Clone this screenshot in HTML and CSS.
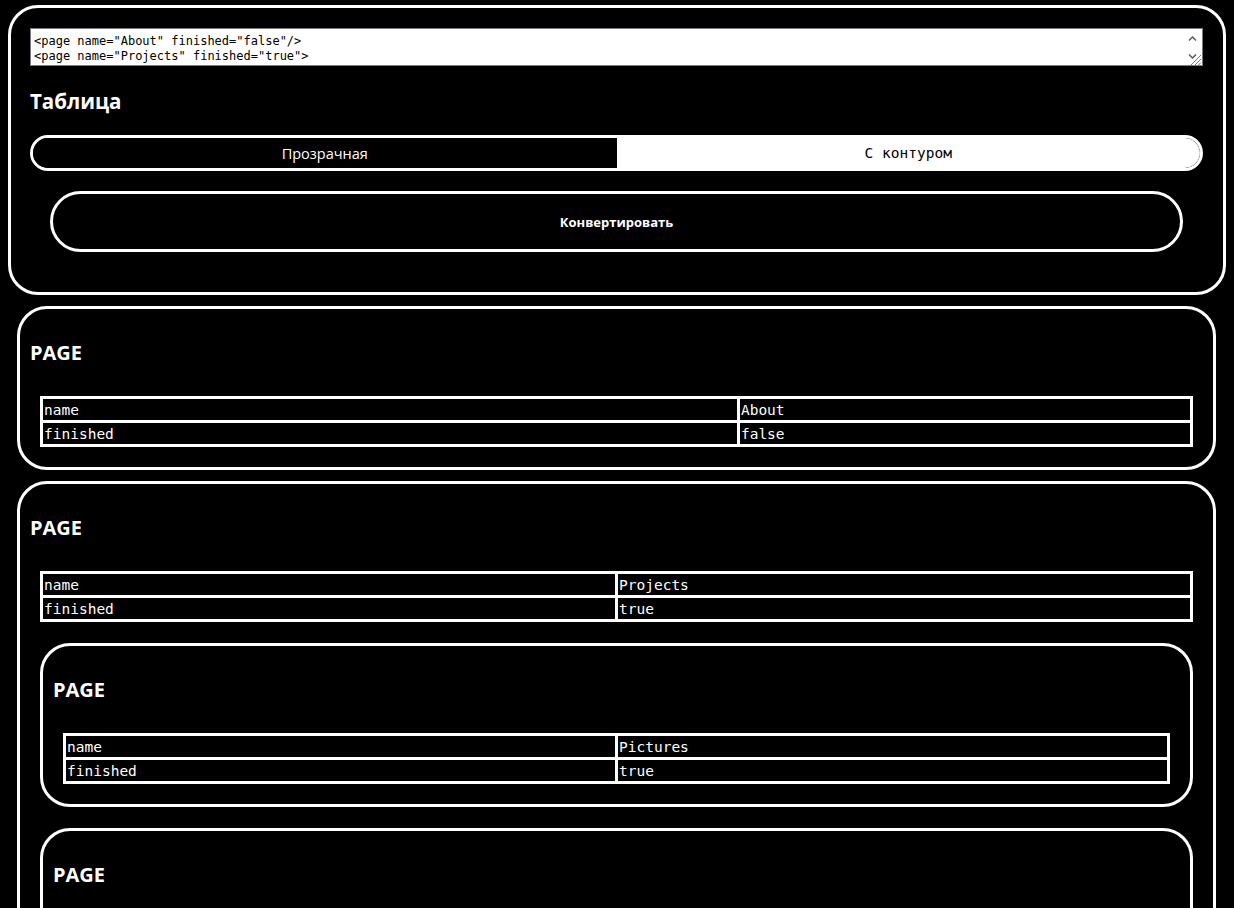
FILE: index.html
```html
<!DOCTYPE html>
<html lang="ru">
<head>
<meta charset="utf-8">
<title>XML → Таблица</title>
<link rel="stylesheet" href="styles.css">
</head>
<body>
<section class="panel">
  <div class="code-wrap">
    <textarea class="code" spellcheck="false">&lt;page name="About" finished="false"/&gt;
&lt;page name="Projects" finished="true"&gt;
  &lt;page name="Pictures" finished="true"/&gt;
  &lt;page name="Videos" finished="false"/&gt;
&lt;/page&gt;</textarea>
    <svg class="scroll-ui" width="17" height="36" viewBox="0 0 17 36" aria-hidden="true">
      <polyline points="4,11.5 7.5,8 11,11.5" fill="none" stroke="#5a5a5a" stroke-width="1.5"/>
      <polyline points="4,25.5 7.5,29 11,25.5" fill="none" stroke="#5a5a5a" stroke-width="1.5"/>
      <line x1="6" y1="36" x2="16" y2="26" stroke="#7a7a7a" stroke-width="1"/>
      <line x1="10" y1="36" x2="16" y2="30" stroke="#7a7a7a" stroke-width="1"/>
      <line x1="13.5" y1="36" x2="16" y2="33.5" stroke="#7a7a7a" stroke-width="1"/>
    </svg>
  </div>
  <h1 class="title">Таблица</h1>
  <div class="toggle">
    <button class="toggle-opt toggle-opt--dark">Прозрачная</button>
    <button class="toggle-opt toggle-opt--light">С контуром</button>
  </div>
  <button class="convert">Конвертировать</button>
</section>

<div class="results">
  <div class="node node--top">
    <h2 class="node-title">PAGE</h2>
    <table class="attrs">
      <tr><td>name</td><td>About</td></tr>
      <tr><td>finished</td><td>false</td></tr>
    </table>
  </div>

  <div class="node node--top">
    <h2 class="node-title">PAGE</h2>
    <table class="attrs">
      <tr><td>name</td><td>Projects</td></tr>
      <tr><td>finished</td><td>true</td></tr>
    </table>
    <div class="node node--child">
      <h2 class="node-title">PAGE</h2>
      <table class="attrs">
        <tr><td>name</td><td>Pictures</td></tr>
        <tr><td>finished</td><td>true</td></tr>
      </table>
    </div>
    <div class="node node--child">
      <h2 class="node-title">PAGE</h2>
      <table class="attrs">
        <tr><td>name</td><td>Videos</td></tr>
        <tr><td>finished</td><td>false</td></tr>
      </table>
    </div>
  </div>
</div>
</body>
</html>
```

FILE: styles.css
```css
html {
  scrollbar-width: none;
  background: #000;
}
html::-webkit-scrollbar { width: 0; height: 0; }

body {
  margin: 5px 8px;
  background: #000;
  color: #fff;
  font-family: "Open Sans", "Noto Sans", sans-serif;
}

.panel {
  border: 3px solid #fff;
  border-radius: 30px;
  padding: 20px 20px 20px 19px;
}

.code-wrap {
  position: relative;
  height: 38px;
}

.code {
  display: block;
  box-sizing: border-box;
  width: 100%;
  height: 38px;
  margin: 0;
  padding: 5px 20px 1px 3px;
  border: 1px solid #7a7a86;
  border-radius: 0;
  background: #fff;
  color: #000;
  font-family: "DejaVu Sans Mono", monospace;
  font-size: 12px;
  line-height: 15px;
  overflow: hidden;
  resize: none;
  white-space: pre;
  outline: none;
}

.scroll-ui {
  position: absolute;
  top: 1px;
  right: 1px;
}

.title {
  margin: 22px 0 20px;
  font-size: 20.5px;
  line-height: 27px;
  font-weight: 700;
}

.toggle {
  display: flex;
  height: 36px;
  box-sizing: border-box;
  border: 3px solid #fff;
  border-radius: 18px;
  overflow: hidden;
  margin-bottom: 20px;
}

.toggle-opt {
  flex: 1 1 0;
  margin: 0;
  padding: 0;
  border: 0;
  cursor: pointer;
}

.toggle-opt--dark {
  background: #000;
  color: #fff;
  font-family: "Open Sans", sans-serif;
  font-size: 14.5px;
}

.toggle-opt--light {
  background: #fff;
  color: #000;
  font-family: "DejaVu Sans Mono", monospace;
  font-size: 14.5px;
  border-radius: 0 15px 15px 0;
  box-shadow: inset -1px 0 0 #d6d6d6;
}

.convert {
  display: block;
  box-sizing: border-box;
  width: calc(100% - 40px);
  height: 61px;
  margin: 0 20px 20px;
  border: 3px solid #fff;
  border-radius: 31px;
  background: #000;
  color: #fff;
  font-family: "Open Sans", sans-serif;
  font-size: 13px;
  font-weight: 700;
  cursor: pointer;
}

.results {
  display: flex;
  flex-direction: column;
}

.node {
  display: flex;
  flex-direction: column;
  border: 3px solid #fff;
  border-radius: 30px;
  padding: 30px 10px 10px;
}

.node--top {
  margin: 11px 10px 0 9px;
}

.node--child {
  margin: 11px 10px 10px;
}

.node-title {
  margin: 0 0 30px;
  font-size: 20px;
  line-height: 27px;
  font-weight: 700;
}

.attrs {
  width: calc(100% - 20px);
  margin: 0 10px 10px;
  border-spacing: 0;
  border-top: 3px solid #fff;
  border-left: 3px solid #fff;
  font-family: "DejaVu Sans Mono", monospace;
  font-size: 14.5px;
  line-height: 17px;
}

.attrs td {
  padding: 2.5px 1px 1.5px;
  border-right: 3px solid #fff;
  border-bottom: 3px solid #fff;
  color: #fff;
}
```
